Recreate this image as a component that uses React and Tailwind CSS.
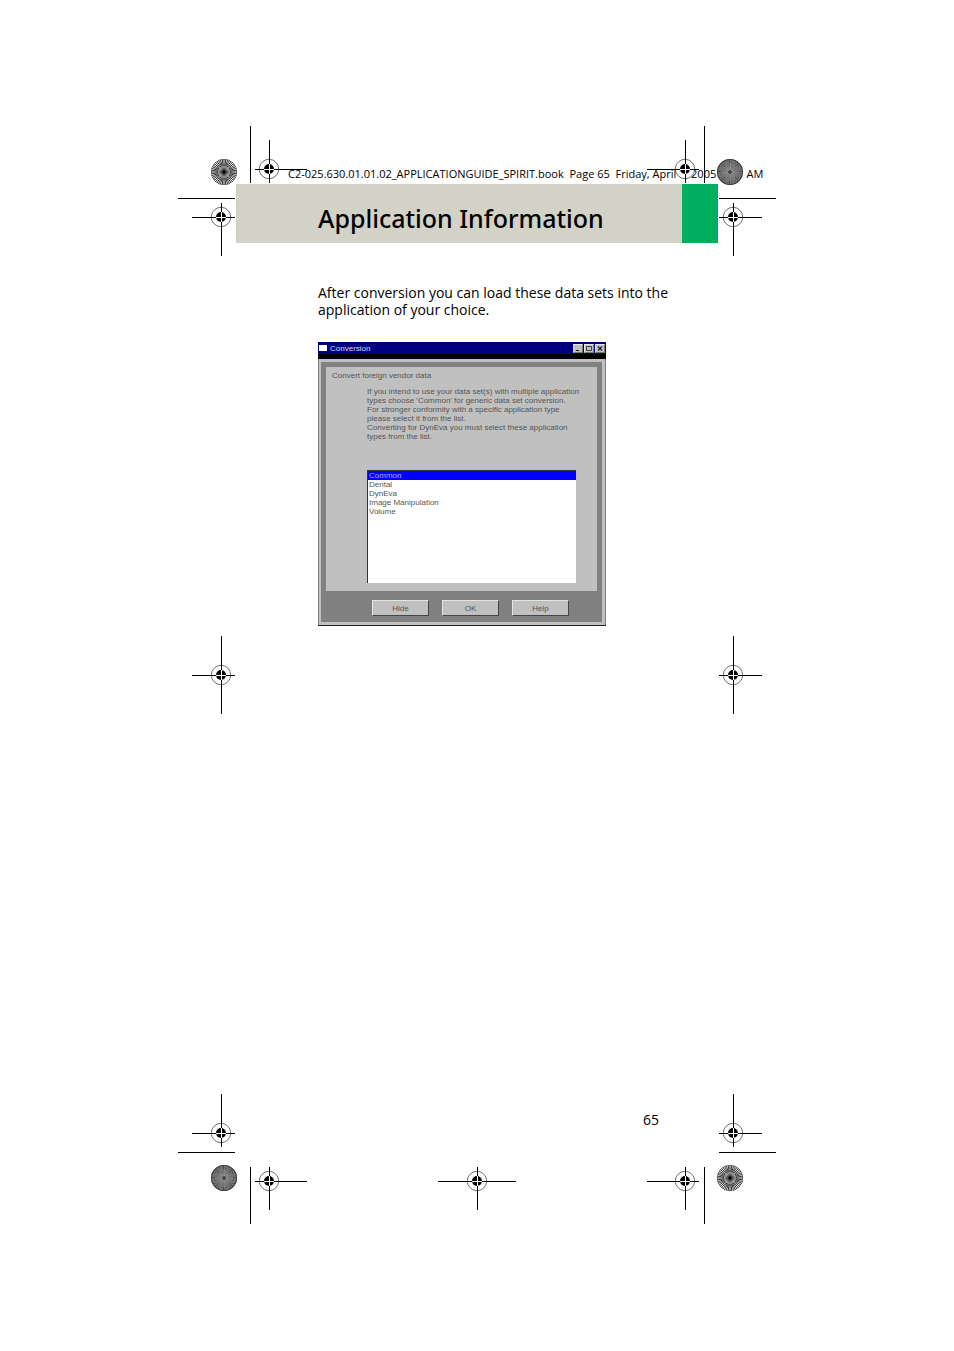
const APP_TYPES = ["Common", "Dental", "DynEva", "Image Manipulation", "Volume"];

const Line = ({ x, y, w = 1, h = 1 }) => (
  <rect x={x} y={y} width={w} height={h} fill="#000" shapeRendering="crispEdges" />
);

// registration target: ring, solid dot and a knocked out cross
const Target = ({ x, y }) => (
  <g>
    <circle cx={x} cy={y} r="9.7" fill="#fff" stroke="#333" strokeWidth="0.7" />
    <Line x={x - 10} y={y} w={20} />
    <Line x={x} y={y - 10} h={20} />
    <circle cx={x} cy={y} r="5" fill="#000" />
    <g fill="#fff" shapeRendering="crispEdges">
      <rect x={x - 5} y={y} width="10" height="1" />
      <rect x={x} y={y - 5} width="1" height="10" />
    </g>
  </g>
);

const rays = (x, y, count, from, to) => {
  let d = "";
  for (let i = 0; i < count; i++) {
    const a = (i * 2 * Math.PI) / count;
    const cos = Math.cos(a);
    const sin = Math.sin(a);
    d += `M${x + from * cos} ${y + from * sin}L${x + to * cos} ${y + to * sin}`;
  }
  return d;
};

const Rosette = ({ x, y, dark }) => {
  if (dark) {
    return (
      <g fill="none">
        <circle cx={x} cy={y} r="13" fill="#4a4a4a" />
        <path
          d={rays(x, y, 60, 2, 13)}
          stroke="#8c8c8c"
          strokeWidth="0.6"
          shapeRendering="crispEdges"
        />
        <circle cx={x} cy={y} r="12.6" stroke="#333" strokeWidth="0.8" />
      </g>
    );
  }
  return (
    <g fill="none">
      <circle cx={x} cy={y} r="13" fill="#fff" />
      <path d={rays(x, y, 44, 6, 13)} stroke="#000" strokeWidth="0.8" />
      <path d={rays(x, y, 44, 1, 6)} stroke="#000" strokeWidth="0.4" />
      <circle cx={x} cy={y} r="12.7" stroke="#444" strokeWidth="0.6" />
      <circle cx={x} cy={y} r="1.2" fill="#000" />
    </g>
  );
};

const Marks = ({ className, width, height, children }) => (
  <svg
    aria-hidden="true"
    className={`absolute ${className}`}
    width={width}
    height={height}
    viewBox={`0 0 ${width} ${height}`}
  >
    {children}
  </svg>
);

const PrinterMarks = () => (
  <div className="pointer-events-none">
    <Marks className="left-0 top-0" width={130} height={130}>
      <Line x={72} y={0} h={57} />
      <Line x={0} y={72} w={57} />
      <Line x={77} y={43} w={52} />
      <Line x={91} y={14} h={43} />
      <Line x={14} y={91} w={43} />
      <Line x={43} y={77} h={53} />
      <Target x={91} y={43} />
      <Target x={43} y={91} />
      <Rosette x={46} y={46} />
    </Marks>

    <Marks className="right-0 top-0" width={130} height={130}>
      <Line x={58} y={0} h={57} />
      <Line x={73} y={72} w={57} />
      <Line x={1} y={43} w={52} />
      <Line x={39} y={14} h={43} />
      <Line x={73} y={91} w={43} />
      <Line x={87} y={77} h={53} />
      <Target x={39} y={43} />
      <Target x={87} y={91} />
      <Rosette x={84} y={46} dark />
    </Marks>

    <Marks className="left-0 top-1/2 -translate-y-1/2" width={58} height={78}>
      <Line x={14} y={39} w={43} />
      <Line x={43} y={0} h={78} />
      <Target x={43} y={39} />
    </Marks>

    <Marks className="right-0 top-1/2 -translate-y-1/2" width={58} height={78}>
      <Line x={1} y={39} w={43} />
      <Line x={15} y={0} h={78} />
      <Target x={15} y={39} />
    </Marks>

    <Marks className="bottom-0 left-0" width={130} height={130}>
      <Line x={43} y={0} h={53} />
      <Line x={14} y={39} w={43} />
      <Line x={0} y={58} w={57} />
      <Line x={72} y={73} h={57} />
      <Line x={77} y={87} w={52} />
      <Line x={91} y={73} h={43} />
      <Target x={43} y={39} />
      <Target x={91} y={87} />
      <Rosette x={46} y={84} dark />
    </Marks>

    <Marks className="bottom-0 left-1/2 -translate-x-1/2" width={78} height={58}>
      <Line x={0} y={15} w={78} />
      <Line x={39} y={1} h={43} />
      <Target x={39} y={15} />
    </Marks>

    <Marks className="bottom-0 right-0" width={130} height={130}>
      <Line x={87} y={0} h={53} />
      <Line x={73} y={39} w={43} />
      <Line x={73} y={58} w={57} />
      <Line x={58} y={73} h={57} />
      <Line x={1} y={87} w={52} />
      <Line x={39} y={73} h={43} />
      <Target x={87} y={39} />
      <Target x={39} y={87} />
      <Rosette x={84} y={84} />
    </Marks>
  </div>
);

const WindowButton = ({ label, children }) => (
  <button
    aria-label={label}
    className="h-[9px] w-[10px] border border-[#e4e4e4] border-b-[#777] border-r-[#777] bg-[#c0c0c0]"
  >
    <svg viewBox="0 0 8 7" className="block h-full w-full" fill="none" stroke="#222">
      {children}
    </svg>
  </button>
);

const DialogButton = ({ children }) => (
  <button className="h-4 w-[57px] border border-[#e4e4e4] border-b-[#444] border-r-[#444] bg-[#c0c0c0] text-center">
    {children}
  </button>
);

const ConversionDialog = () => (
  <section
    aria-label="Conversion"
    className="w-[288px] max-w-full border-b border-[#222] font-['Liberation_Sans',sans-serif] text-[8px] leading-[9px] text-[#555]"
  >
    <div className="flex h-3 items-center gap-[3px] bg-[#000080] px-px">
      <span className="h-[6px] w-2 bg-white" />
      <h2 className="flex-1 text-[#d8d8f0]">Conversion</h2>
      <div className="flex gap-px">
        <WindowButton label="Minimize">
          <path d="M2 5.5h3" />
        </WindowButton>
        <WindowButton label="Maximize">
          <path d="M1.5 1.5h5v4h-5z" strokeWidth="0.8" />
        </WindowButton>
        <WindowButton label="Close">
          <path d="M2 1.5l4 4M6 1.5l-4 4" strokeWidth="1.3" />
        </WindowButton>
      </div>
    </div>
    <div className="h-[5px] bg-black" />

    <div className="border-x border-[#808080] bg-[#c0c0c0] p-[3px] pl-[2px]">
      <div className="bg-[#808080] p-[5px]">
        <div className="bg-[#c0c0c0] px-[6px] pb-2 pt-1">
          <p>Convert foreign vendor data</p>
          <div className="pl-[35px] pr-[15px] pt-[7px]">
            <p className="whitespace-nowrap">
              If you intend to use your data set(s) with multiple application
              <br />
              types choose 'Common' for generic data set conversion.
              <br />
              For stronger conformity with a specific application type
              <br />
              please select it from the list.
              <br />
              Converting for DynEva you must select these application
              <br />
              types from the list.
            </p>
            <select
              size={5}
              defaultValue="Common"
              aria-label="Application type"
              className="mt-[29px] block h-[113px] w-full overflow-hidden border-l border-t border-[#333] bg-white"
            >
              {APP_TYPES.map((type) => (
                <option
                  key={type}
                  className="h-[9px] min-h-0 p-0 px-px leading-[9px] checked:bg-[linear-gradient(#0000ff,#0000ff)] checked:text-[#b0b0ff]"
                >
                  {type}
                </option>
              ))}
            </select>
          </div>
        </div>
        <div className="flex justify-center gap-[13px] pb-px pl-[18px] pt-[9px]">
          <DialogButton>Hide</DialogButton>
          <DialogButton>OK</DialogButton>
          <DialogButton>Help</DialogButton>
        </div>
      </div>
    </div>
  </section>
);

const App = () => {
  return (
    <div className="min-h-screen bg-white py-[126px] font-['Open_Sans',sans-serif] text-black">
      <div className="relative mx-auto flex min-h-[1098px] w-full max-w-[598px] flex-col">
        <p className="whitespace-pre pb-[2px] pl-[110px] pt-10 text-[11px] leading-4">
          C2-025.630.01.01.02_APPLICATIONGUIDE_SPIRIT.book  Page 65  Friday, April 8, 2005  9:21 AM
        </p>

        <header className="mx-[58px] flex h-[59px] bg-[#d2d2c6]">
          <h1 className="flex-1 pl-[82px] pt-4 font-['Noto_Sans',sans-serif] text-[25px] font-medium leading-9">
            Application Information
          </h1>
          <div className="w-9 bg-[#00ae61]" />
        </header>

        <main className="flex-1 pl-[140px] pr-[117px] pt-[41px]">
          <p className="mb-6 whitespace-nowrap text-[14px] leading-[17px]">
            After conversion you can load these data sets into the
            <br />
            application of your choice.
          </p>
          <ConversionDialog />
        </main>

        <footer className="pb-[94px] pr-[117px] text-right text-[14px] leading-5">65</footer>

        <PrinterMarks />
      </div>
    </div>
  );
};

export default App;
